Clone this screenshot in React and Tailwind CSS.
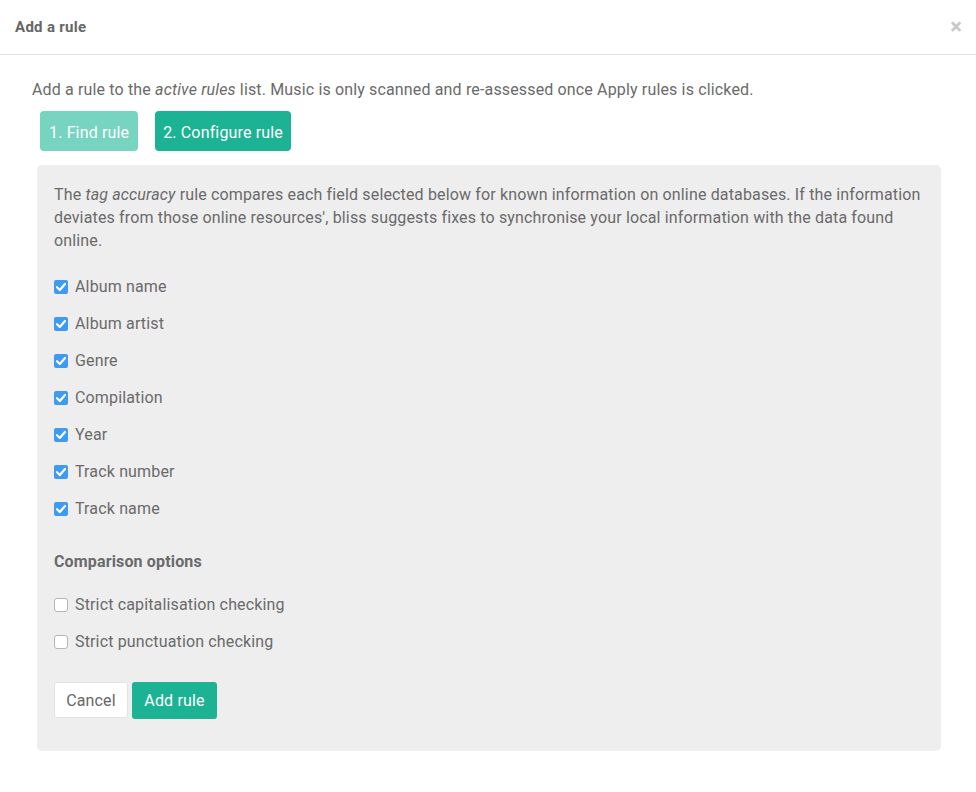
import React from 'react'

const fields = ['Album name', 'Album artist', 'Genre', 'Compilation', 'Year', 'Track number', 'Track name']
const options = ['Strict capitalisation checking', 'Strict punctuation checking']

function Box({ checked }){
  if (checked) {
    return (
      <span className="w-[14px] h-[14px] rounded-[2px] bg-[#3d9bf2] flex items-center justify-center shrink-0">
        <svg viewBox="0 0 14 14" className="w-[14px] h-[14px]">
          <path d="M3 7.2 L5.8 10 L11 4" fill="none" stroke="#fff" strokeWidth="2.2" strokeLinecap="round" strokeLinejoin="round" />
        </svg>
      </span>
    )
  }
  return <span className="w-[14px] h-[14px] rounded-[3px] bg-white border border-[#b5b5b5] shrink-0" />
}

function Row({ label, checked }){
  return (
    <label className="flex items-center h-[23px] text-[16px]">
      <Box checked={checked} />
      <span className="ml-[7px]">{label}</span>
    </label>
  )
}

export default function App(){
  return (
    <div className="min-h-[792px] bg-white text-[#6a6a6a] tracking-[0.15px] font-['Roboto',sans-serif]">
      <header className="h-[55px] border-b border-[#e5e5e5] pl-[15px] pr-[14px] flex items-center justify-between">
        <h2 className="text-[15px] tracking-[0.3px] font-bold text-[#666] mt-[1px]">Add a rule</h2>
        <span className="text-[22px] leading-none font-bold text-[#c8c8c8]">×</span>
      </header>
      <div className="pl-[32px] pr-[35px] pt-[23px]">
        <p className="text-[16px] leading-[23px]">
          Add a rule to the <em>active rules</em> list. Music is only scanned and re-assessed once Apply rules is clicked.
        </p>
        <div className="mt-[10px] ml-[8px] flex gap-[17px]">
          <button className="h-[40px] px-[9px] pt-[4px] rounded-[4px] bg-[#76d4c0] text-white text-[16px]">1. Find rule</button>
          <button className="h-[40px] px-[8px] pt-[4px] rounded-[4px] bg-[#1bb394] text-white text-[16px]">2. Configure rule</button>
        </div>
        <div className="mt-[14px] ml-[5px] rounded-[5px] bg-[#eeeeee] pl-[17px] pr-[16px] pt-[18px] pb-[32px]">
          <p className="text-[16px] leading-[23px]">
            The <em>tag accuracy</em> rule compares each field selected below for known information on online databases. If the information deviates from those online resources', bliss suggests fixes to synchronise your local information with the data found online.
          </p>
          <div className="mt-[23px] flex flex-col gap-[14px]">
            {fields.map(f => <Row key={f} label={f} checked />)}
          </div>
          <h3 className="mt-[30px] text-[16px] leading-[23px] font-bold">Comparison options</h3>
          <div className="mt-[20px] flex flex-col gap-[14px]">
            {options.map(f => <Row key={f} label={f} />)}
          </div>
          <div className="mt-[29px] flex gap-[4px]">
            <button className="h-[36px] w-[74px] pt-[2px] rounded-[3px] bg-white border border-[#e3e3e3] text-[16px] text-[#666]">Cancel</button>
            <button className="h-[37px] w-[85px] pt-[1px] rounded-[3px] bg-[#1bb394] text-white text-[16px]">Add rule</button>
          </div>
        </div>
      </div>
    </div>
  )
}
